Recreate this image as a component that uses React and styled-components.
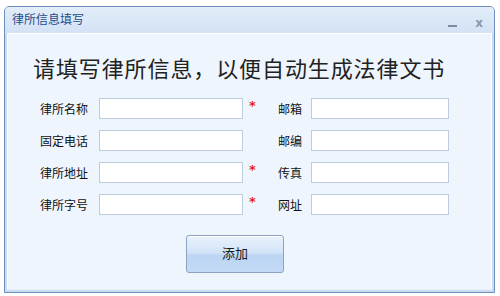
import styled, { createGlobalStyle } from 'styled-components';

const cjk = `"Noto Sans CJK SC", "Liberation Sans", sans-serif`;

const fieldRows = [
	{ label: '律所名称', required: true, side: '邮箱' },
	{ label: '固定电话', required: false, side: '邮编' },
	{ label: '律所地址', required: true, side: '传真' },
	{ label: '律所字号', required: true, side: '网址' },
];

export default function App() {
	return (
		<>
			<GlobalStyle />
			<Window>
				<TitleBar>
					<Title>律所信息填写</Title>
					<Controls>
						<Minimize />
						<Close>x</Close>
					</Controls>
				</TitleBar>
				<Frame>
					<Panel>
						<Heading>请填写律所信息，以便自动生成法律文书</Heading>
						<Form>
							{fieldRows.map((row) => (
								<Row key={row.label}>
									<Label>{row.label}</Label>
									<Input />
									<Star $show={row.required}>*</Star>
									<Label>{row.side}</Label>
									<Input $narrow />
								</Row>
							))}
						</Form>
						<Actions>
							<AddButton>添加</AddButton>
						</Actions>
					</Panel>
				</Frame>
			</Window>
		</>
	);
}

const GlobalStyle = createGlobalStyle`
	* { box-sizing: border-box; }
	body {
		margin: 0;
		background: #ffffff;
		font-family: ${cjk};
	}
`;

const Window = styled.div`
	margin: 6px 0 0 4px;
	width: 491px;
	height: 287px;
	border: 1px solid #6f8fbd;
	border-radius: 5px 5px 0 0;
	background: #c9dbf1;
	display: flex;
	flex-direction: column;
	overflow: hidden;
`;

const TitleBar = styled.div`
	height: 26px;
	display: flex;
	align-items: center;
	justify-content: space-between;
	padding: 0 11px 0 7px;
	background: linear-gradient(#e3edf9, #d2e2f5);
`;

const Title = styled.span`
	font-size: 12px;
	color: #1d4c8c;
	margin-top: -3px;
`;

const Controls = styled.div`
	display: flex;
	align-items: center;
	gap: 18px;
	margin-top: 8px;
`;

const Minimize = styled.span`
	width: 9px;
	height: 2px;
	background: #7b8aa0;
	margin-top: 4px;
`;

const Close = styled.span`
	font-family: "DejaVu Sans", sans-serif;
	font-size: 12px;
	font-weight: bold;
	color: #8a97aa;
	line-height: 1;
	margin-top: -3px;
`;

const Frame = styled.div`
	flex: 1;
	padding: 0 2px 2px 2px;
	background: #c9dbf1;
`;

const Panel = styled.div`
	height: 100%;
	border: 1px solid #ffffff;
	border-bottom-color: #e8f0fa;
	background: #eef5fd;
	padding: 18px 0 0 0;
`;

const Heading = styled.h1`
	margin: 0 0 0 25px;
	font-family: ${cjk};
	font-weight: normal;
	font-size: 22px;
	line-height: 30px;
	color: #222222;
	letter-spacing: 0.9px;
`;

const Form = styled.div`
	margin: 16px 0 0 32px;
	display: flex;
	flex-direction: column;
	gap: 11px;
`;

const Row = styled.div`
	display: grid;
	grid-template-columns: 59px 144px 35px 33px 138px;
	align-items: center;
	height: 21px;
`;

const Label = styled.span`
	font-size: 12px;
	color: #111111;
	white-space: nowrap;
`;

const Input = styled.div`
	width: ${(p) => (p.$narrow ? '138px' : '144px')};
	height: 21px;
	background: #ffffff;
	border: 1px solid #bccbde;
`;

const Star = styled.span`
	visibility: ${(p) => (p.$show ? 'visible' : 'hidden')};
	color: #e51e1e;
	font-family: "DejaVu Sans", sans-serif;
	font-size: 13px;
	font-weight: bold;
	padding-left: 6px;
	align-self: start;
	line-height: 1;
	margin-top: 1px;
`;

const Actions = styled.div`
	margin: 20px 0 0 178px;
`;

const AddButton = styled.button`
	width: 98px;
	height: 38px;
	border: 1px solid #8aa3c4;
	border-radius: 3px;
	background: linear-gradient(#eaf2fc 0%, #d3e4f8 45%, #bcd5f3 55%, #c3daf5 100%);
	box-shadow: inset 0 1px 0 #ffffff;
	font-family: ${cjk};
	font-size: 13px;
	color: #1a1a1a;
	padding: 0 0 4px 0;
`;
